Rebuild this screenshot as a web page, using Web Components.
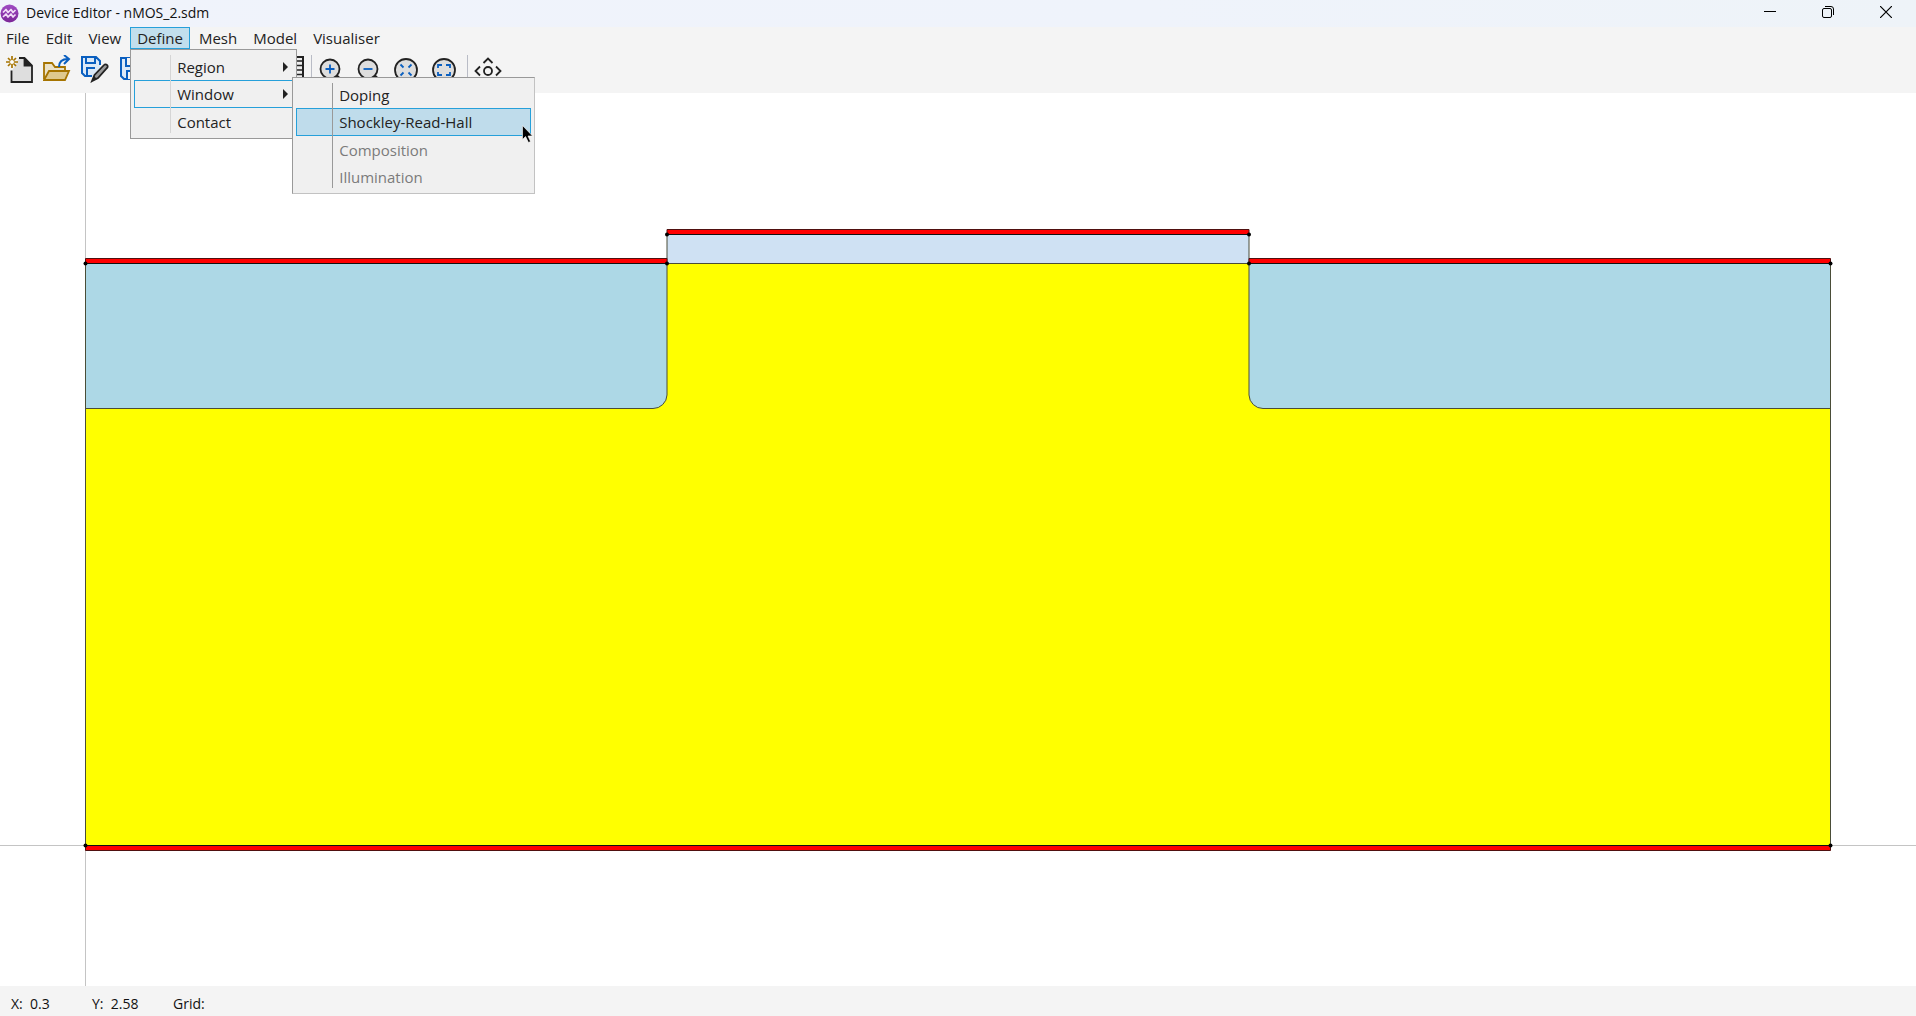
<!DOCTYPE html>
<html lang="en"><head><meta charset="utf-8"><title>Device Editor - nMOS_2.sdm</title>
<style>html,body{margin:0;height:100%}body{font:15px/20px "Open Sans",sans-serif;color:#222;overflow:hidden}</style></head>
<body><device-editor></device-editor>
<script>
const make=(name,html,extra)=>customElements.define(name,class extends HTMLElement{
  constructor(){super();this.attachShadow({mode:'open'}).innerHTML='<style>*{box-sizing:border-box}button{font:inherit;color:inherit;background:none;border:0;padding:0;margin:0}svg{display:block}</style>'+html;}
  connectedCallback(){if(extra)extra(this,this.shadowRoot);}
});

make('title-bar',`<style>
:host{display:flex;height:27px;background:linear-gradient(90deg,#f0f3fb,#eff3fb 60%,#eef3f8);align-items:center;padding:0 1px 0 0;color:#111}
h1{font:inherit;font-size:14px;margin:0 auto 0 7px;padding-bottom:1px}
button{width:58px;height:27px;display:grid;place-items:center;padding-bottom:3px}
</style>
<svg width="19" height="19" viewBox="0 0 19 19"><defs><linearGradient id="g" x2="0" y2="1"><stop stop-color="#a04cc4"/><stop offset="1" stop-color="#7b2597"/></linearGradient></defs><circle cx="9.5" cy="9.500" r="9" fill="url(#g)"/><path d="M3 8.500 6 5.500l2 3L11 5.500l2 3L15.500 6M3 13l3-3 2 3 3-3 2 3 2.500-2.500" fill="none" stroke="#f2ddf8" stroke-width="1.700" stroke-linejoin="round"/></svg>
<h1><slot></slot></h1>
<button aria-label="Minimise"><svg width="12" height="12"><path d="M0 5.500h12" stroke="#000"/></svg></button>
<button aria-label="Restore"><svg width="12" height="12" fill="none" stroke="#000"><rect x=".5" y="2.500" width="9" height="9" rx="1.500"/><path d="M3 .5h6a2.500 2.500 0 0 1 2.500 2.500v6"/></svg></button>
<button aria-label="Close"><svg width="12" height="12"><path d="M0 0 12 12M12 0 0 12" stroke="#000" stroke-width="1.200"/></svg></button>`);

make('menu-bar',`<style>
:host{display:flex;gap:2px;height:22px;background:#f4f4f4}
</style><slot></slot>`);

make('menu-title',`<style>
:host{display:block;position:relative;left:0}
button{height:22px;padding:0 6px;border:1px solid transparent;display:block;white-space:nowrap}
:host([open]) button{background:#c2dfed;border-color:#26a0da}
.drop{position:absolute;top:100%;left:0;z-index:5}
</style><button><slot></slot></button><div class="drop"><slot name="menu"></slot></div>`);

make('pop-menu',`<style>
:host{display:flex;flex-direction:column;position:relative;width:167px;background:#f0f0f0;border:1px solid #999;padding:3px}
:host::before{content:"";position:absolute;left:39px;top:5px;bottom:5px;width:1px;background:#d5d5d5;z-index:1}
:host([sub]){width:243px;border-right-color:#c2c2c2;border-bottom-color:#c2c2c2}
:host([sub])::before{background:#999}
</style><slot></slot>`);

make('menu-item',`<style>
:host{display:block;position:relative}
button{width:100%;height:27px;border:1px solid transparent;padding:0 3px 0 42px;display:flex;align-items:center;justify-content:space-between;text-align:left}
:host(:nth-child(2)) button{height:28px}
:host([open]) button{border-color:#26a0da}
:host([hot]) button{background:#bfdceb;border-color:#26a0da}
:host([off]) button{color:#7b7b7b}
svg{display:none}
:host([more]) svg{display:block}
.sub{position:absolute;left:158px;top:-3px;z-index:4}
</style><button><slot></slot><svg width="6" height="10"><path d="M0 0 5 5 0 10z" fill="#222"/></svg></button><div class="sub"><slot name="sub"></slot></div>`,
(h,r)=>{if(h.hasAttribute('off'))r.querySelector('button').disabled=true;});

const lens='<circle cx="14" cy="14" r="9.500" fill="#dedede" stroke="#222" stroke-width="1.800"/><path d="M20.500 20.500 27 27" stroke="#222" stroke-width="2.500"/>';
const lensBig='<circle cx="14" cy="15" r="11" fill="#dedede" stroke="#222" stroke-width="1.800"/><path d="M22 23 27 28" stroke="#222" stroke-width="2.500"/>';
const disk='<path d="M2 3h18l4 4v17H5l-3-3z" fill="#dce9f7" stroke="#0a5fc0" stroke-width="2"/><path d="M7 3v8h11V3M8 24v-8h10v8" fill="#f4f4f4" stroke="#0a5fc0" stroke-width="2"/>';
const icons={
 new:'<path d="M7 16V27H27V10L20 3H14" fill="#dedede"/><path d="M6.500 15.500V27H27V10.500L19.500 3H14M19.500 3V10.500H27" fill="none" stroke="#222" stroke-width="1.800"/><path d="M20 3v7h7z" fill="#222"/><path d="M7 1v12M1 7h12M3 3l8 8M11 3 3 11" stroke="#a67400" stroke-width="1.700"/><circle cx="7" cy="7" r="2" fill="#fff"/>',
 open:'<path d="M1 24V8h8l3 4h10v5" fill="#ebe2c8" stroke="#a67400" stroke-width="1.800"/><path d="M1 25 6 16H26L22 25z" fill="#dfc98e" stroke="#a67400" stroke-width="1.800"/><path d="M16 12C16 7 19 4 25 4M21 0l5 4-5 5" fill="none" stroke="#0a5fc0" stroke-width="2"/>',
 edit:'<path d="M1 2h14l4 4v15H4l-3-3z" fill="#dce9f7"/><path d="M19 10V6l-4-4H1v16l3 3h7M5 2v6h9V2M6 20v-7h8" fill="none" stroke="#0a5fc0" stroke-width="2"/><path d="M11 26 13.500 20 23 10a2 2 0 0 1 3 0 2 2 0 0 1 0 3L17 23z" fill="#999" stroke="#222" stroke-width="1.800"/><path d="M11 26l2-5 3 3z" fill="#222"/>',
 save:disk,
 grid:'<rect x="2" y="2" width="24" height="22" fill="#eee" stroke="#222" stroke-width="2"/><path d="M2 6h24M2 10.500h24M2 15h24M2 19.500h24M14 2v22" stroke="#222" stroke-width="1.500"/>',
 plus:lens+'<path d="M14 9.500v9M9.500 14h9" stroke="#0a5fc0" stroke-width="1.800"/>',
 minus:lens+'<path d="M9.500 14h9" stroke="#0a5fc0" stroke-width="1.800"/>',
 shrink:lensBig+'<path d="M8.500 9.500l3 3M19.500 9.500l-3 3M8.500 20.500l3-3M19.500 20.500l-3-3" stroke="#0a5fc0" stroke-width="1.800"/>',
 fit:lensBig+'<path d="M8 13V10h4M16 10h4v3M20 17v3h-4M12 20H8v-3" fill="none" stroke="#0a5fc0" stroke-width="1.800"/>',
 pan:'<g fill="none" stroke="#222" stroke-width="1.800"><circle cx="14" cy="16" r="4"/><path d="M6 11.500 1.500 16 6 20.500M22 11.500l4.500 4.500-4.500 4.500M9.500 8 14 3.500 18.500 8M9.500 24l4.500 4.500 4.500-4.500"/></g>'};
make('tool-button',`<style>:host{display:block}button{display:block}</style><button></button>`,(h,r)=>{
 const b=r.querySelector('button');b.setAttribute('aria-label',h.getAttribute('label'));
 b.innerHTML='<svg width="28" height="30" viewBox="0 0 28 30">'+icons[h.getAttribute('icon')]+'</svg>';});

make('tool-bar',`<style>
:host{display:flex;height:44px;background:#f4f4f4;padding:6px 0 0 5px}
i{width:1px;height:28px;background:#b9bcc6}
div{display:flex;gap:10px}
.file{margin-right:16px}.grid{margin-right:6px}.zoom{margin:0 9px 0 4px}.pan{margin-left:6px}
</style>
<div class="file"><tool-button icon="new" label="New"></tool-button><tool-button icon="open" label="Open"></tool-button><tool-button icon="edit" label="Save as"></tool-button><tool-button icon="save" label="Save"></tool-button><tool-button icon="save" label="Save all"></tool-button><tool-button icon="save" label="Export"></tool-button><tool-button icon="grid" label="Table"></tool-button></div>
<div class="grid"><tool-button icon="grid" label="Grid"></tool-button></div><i></i>
<div class="zoom"><tool-button icon="plus" label="Zoom in"></tool-button><tool-button icon="minus" label="Zoom out"></tool-button><tool-button icon="shrink" label="Zoom to centre"></tool-button><tool-button icon="fit" label="Zoom to fit"></tool-button></div><i></i>
<div class="pan"><tool-button icon="pan" label="Pan"></tool-button></div>`);

make('device-canvas',`<style>:host{display:block;flex:1;min-height:0;background:#fff}svg{width:100%;height:100%}</style>
<svg viewBox="0 93 1916 893" role="img" aria-label="nMOS cross-section">
<path d="M85.500 93V986M0 845.500H1916" stroke="#c4c4c4"/>
<path d="M85.500 263.500H1830.500V845.500H85.500z" fill="#ff0"/>
<g stroke="#4a4d38" stroke-width="1"><path d="M85.500 263.500H667V395a14 14 0 0 1-14 13.500H85.500zM1249 263.500H1830.500V408.500H1263a14 14 0 0 1-14-13.500z" fill="#add8e6"/>
<path d="M667 234.500H1249V263.500H667z" fill="#cfe1f3"/>
<path d="M85.500 263.500V845.500H1830.500V263.500" fill="none"/></g>
<path d="M85.500 258.500H667V263.500H85.500zM667 229.500H1249V234.500H667zM1249 258.500H1830.500V263.500H1249zM85.500 845.500H1830.500V850.500H85.500z" fill="#f00" stroke="#501010"/>
<path d="M85.500 263.500H667M667 234.500h582M1249 263.500h582M85.500 845.500H1830.500" stroke="#111"/>
<g id="v"></g></svg>`,(h,r)=>{
 r.querySelector('#v').innerHTML=[[85.5,263.5],[667,263.5],[667,234.5],[1249,234.5],[1249,263.5],[1830.5,263.5],[85.5,845.5],[1830.5,845.5]].map(([x,y])=>`<circle cx="${x}" cy="${y}" r="2"/>`).join('');});

make('status-bar',`<style>:host{display:flex;height:30px;background:#f4f4f4;align-items:center;padding:5px 11px 0;font-size:14px;color:#111}span{white-space:pre;min-width:81px}</style>
<span>X:  0.3</span><span>Y:  2.58</span><span>Grid:</span>`);

make('mouse-pointer',`<style>:host{display:block;position:absolute;left:229px;top:47px;z-index:9}</style>
<svg width="12" height="20" viewBox="0 0 12 20"><path d="M.5.5V14.500L3.500 11.500 6.500 17.500 8.500 16.500 6 11H10.500z" fill="#000" stroke="#fff" stroke-width=".6"/></svg>`);

make('device-editor',`<style>:host{display:flex;flex-direction:column;height:100vh}menu-bar{z-index:2;margin-left:-1px}</style>
<title-bar>Device Editor - nMOS_2.sdm</title-bar>
<menu-bar><menu-title>File</menu-title><menu-title>Edit</menu-title><menu-title>View</menu-title>
<menu-title open>Define<pop-menu slot="menu"><menu-item more>Region</menu-item><menu-item more open>Window<pop-menu slot="sub" sub><menu-item>Doping</menu-item><menu-item hot>Shockley-Read-Hall</menu-item><menu-item off>Composition</menu-item><menu-item off>Illumination</menu-item><mouse-pointer></mouse-pointer></pop-menu></menu-item><menu-item>Contact</menu-item></pop-menu></menu-title>
<menu-title>Mesh</menu-title><menu-title>Model</menu-title><menu-title>Visualiser</menu-title></menu-bar>
<tool-bar></tool-bar><device-canvas></device-canvas><status-bar></status-bar>`);
</script></body></html>
